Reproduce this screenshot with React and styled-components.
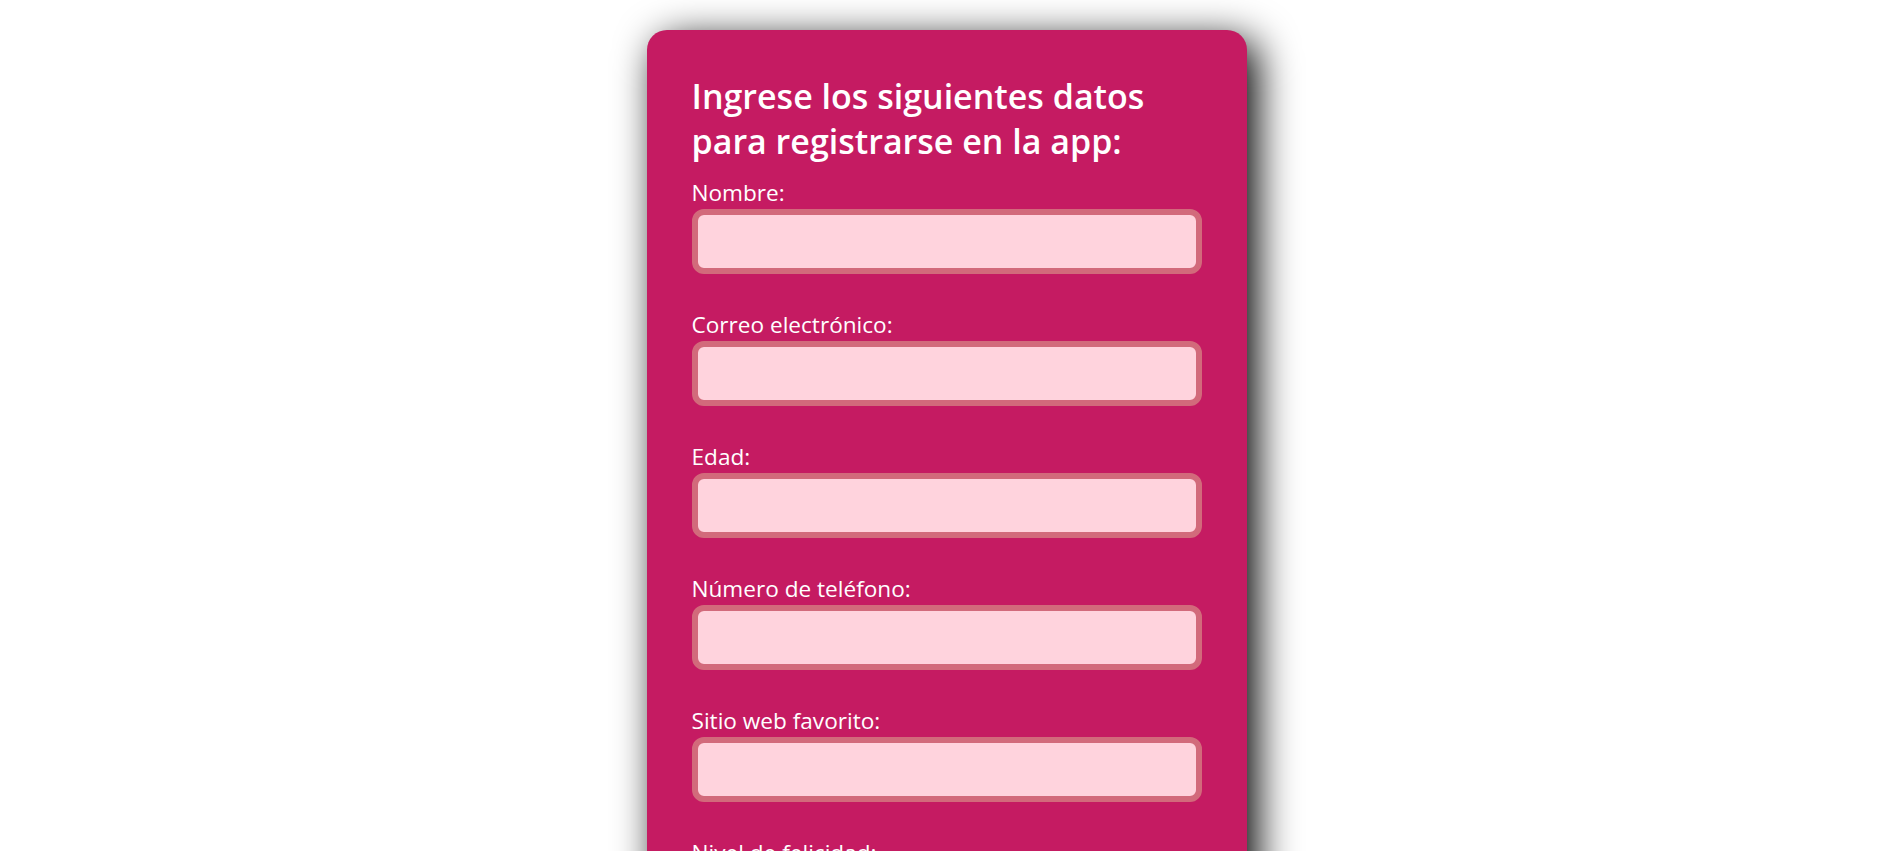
import React from 'react';
import styled, { createGlobalStyle } from 'styled-components';

const GlobalStyle = createGlobalStyle`
  body {
    margin: 0;
    background: #ffffff;
    font-family: "Open Sans", "Noto Sans", sans-serif;
  }
`;

const Page = styled.div`
  display: flex;
  justify-content: center;
  padding: 30px 0 60px;
`;

const Card = styled.form`
  width: 600px;
  box-sizing: border-box;
  padding: 44px 45px 50px;
  background-color: #c51b62;
  border-radius: 20px;
  box-shadow: 10px 10px 40px #000000;
  color: #ffffff;
`;

const Title = styled.h2`
  margin: 0 0 16px;
  font-size: 34px;
  line-height: 45px;
  font-weight: 600;
`;

const Field = styled.div`
  display: flex;
  flex-direction: column;
  align-items: stretch;
  margin-bottom: 38px;
`;

const Label = styled.label`
  font-size: 22.6px;
  line-height: 26px;
  margin-bottom: 3px;
`;

const Input = styled.input`
  width: 100%;
  height: 65px;
  box-sizing: border-box;
  border: 6px solid #d26a7b;
  border-radius: 12px;
  background-color: #ffd3dd;
  outline: none;
  padding: 0 12px;
  font-size: 20px;
  font-family: inherit;
`;

const Range = styled.input`
  width: 100%;
  margin: 10px 0 0;
  accent-color: #ffd3dd;
`;

const Submit = styled.button`
  padding: 14px 40px;
  border: 6px solid #d26a7b;
  border-radius: 12px;
  background-color: #ffd3dd;
  color: #c51b62;
  font-size: 21px;
  font-weight: 600;
  font-family: inherit;
`;

const fields = [
  { id: 'nombre', label: 'Nombre:', type: 'text' },
  { id: 'correo', label: 'Correo electrónico:', type: 'email' },
  { id: 'edad', label: 'Edad:', type: 'number' },
  { id: 'telefono', label: 'Número de teléfono:', type: 'tel' },
  { id: 'web', label: 'Sitio web favorito:', type: 'url' },
];

const App = () => {
  return (
    <>
      <GlobalStyle />
      <Page>
        <Card onSubmit={(e) => e.preventDefault()}>
          <Title>
            Ingrese los siguientes datos
            <br />
            para registrarse en la app:
          </Title>
          {fields.map((f) => (
            <Field key={f.id}>
              <Label htmlFor={f.id}>{f.label}</Label>
              <Input id={f.id} type={f.type} />
            </Field>
          ))}
          <Field>
            <Label htmlFor="felicidad">Nivel de felicidad:</Label>
            <Range id="felicidad" type="range" min="0" max="10" />
          </Field>
          <Submit type="submit">Registrarse</Submit>
        </Card>
      </Page>
    </>
  );
};

export default App;
